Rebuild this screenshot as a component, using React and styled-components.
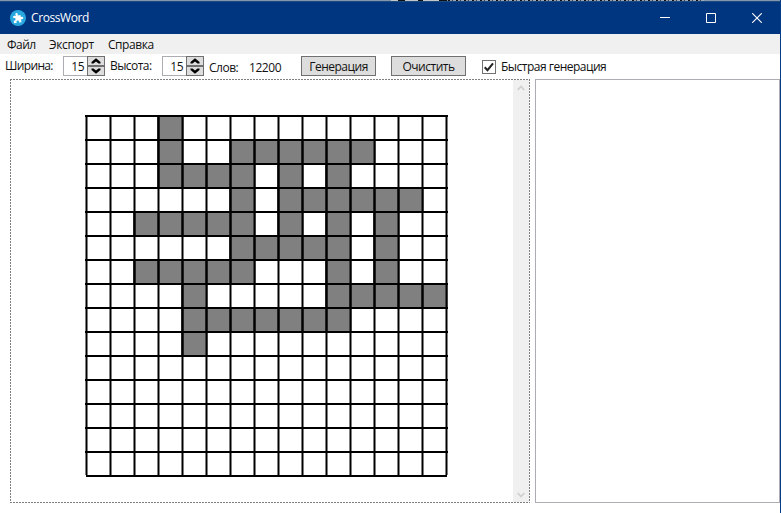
import React from "react";
import styled, { createGlobalStyle } from "styled-components";

const GlobalStyle = createGlobalStyle`
  *, *::before, *::after { box-sizing: border-box; }
  body { margin: 0; overflow: hidden; }
`;

const Window = styled.main`
  width: 781px;
  height: 513px;
  display: flex;
  flex-direction: column;
  background: #fff;
  border-right: 1px solid #053c88;
  color: #111;
  font: 12px/16px "Open Sans", "Noto Sans", sans-serif;
  overflow: hidden;
`;

const BackdropSliver = styled.div`
  height: 1px;
  flex: none;
  margin-right: -1px;
  background:
    repeating-linear-gradient(90deg, #111 0 2px, #8fa0b4 2px 4px, #4a4038 4px 5px, #9aabbd 5px 8px) 448px 0 / 256px 1px no-repeat,
    linear-gradient(#111, #111) 398px 0 / 7px 1px no-repeat,
    linear-gradient(#111, #111) 418px 0 / 5px 1px no-repeat,
    linear-gradient(#111, #111) 439px 0 / 8px 1px no-repeat,
    linear-gradient(#c4c7ca, #c4c7ca) 391px 0 / 48px 1px no-repeat,
    #8496ab;
`;

const TitleBar = styled.header`
  height: 33px;
  flex: none;
  display: flex;
  align-items: center;
  padding-left: 10px;
  background: #00357f;
  border-top: 1px solid #1b4a83;
  color: #fff;
`;

const Title = styled.h1`
  margin: 0 auto 0 5px;
  font-size: 12px;
  font-weight: 400;
  letter-spacing: -0.4px;
`;

const CaptionButton = styled.button`
  width: 46px;
  height: 30px;
  padding: 0;
  border: 0;
  background: none;
  color: inherit;
  display: grid;
  place-items: center;
`;

const CaptionButtons = styled.div`
  display: flex;
`;

const MenuBar = styled.nav`
  height: 20px;
  flex: none;
  display: flex;
  gap: 14px;
  padding: 3px 0 0 7px;
  background: #f0f0f0;
`;

const MenuItem = styled.span`
  width: ${(p) => p.$width}px;
  white-space: nowrap;
  letter-spacing: ${(p) => p.$track}px;
`;

const ToolBar = styled.section`
  height: 25px;
  flex: none;
  display: flex;
  align-items: flex-start;
  padding: 2px 0 0 5px;
`;

const Caption = styled.span`
  width: ${(p) => p.$width}px;
  padding-top: ${(p) => p.$drop || 2}px;
  white-space: nowrap;
  letter-spacing: ${(p) => p.$track}px;
`;

const Spinner = styled.div`
  width: 42px;
  height: 20px;
  margin-right: 5px;
  display: flex;
  border: 1px solid #abadb3;
`;

const SpinnerValue = styled.span`
  flex: 1;
  padding: 2px 3px 0 0;
  text-align: right;
  letter-spacing: -0.5px;
`;

const SpinnerButtons = styled.div`
  width: 18px;
  margin: -1px -1px -1px 0;
  display: grid;
  grid-template-rows: 10px 10px;
`;

const StepButton = styled.button`
  padding: 0;
  border: 1px solid #707070;
  background: #ddd;
  display: grid;
  place-items: center;
`;

const PushButton = styled.button`
  width: 75px;
  height: 20px;
  margin-right: ${(p) => p.$after}px;
  padding: 2px 0 0;
  border: 1px solid #707070;
  background: #ddd;
  color: #111;
  font: inherit;
  letter-spacing: -0.5px;
`;

const CheckBox = styled.span`
  width: 14px;
  height: 14px;
  margin: 4px 5px 0 0;
  display: grid;
  place-items: center;
  border: 1px solid #707070;
`;

const Workspace = styled.div`
  height: 424px;
  display: flex;
  gap: 5px;
  padding-left: 10px;
`;

const BoardPane = styled.section`
  width: 520px;
  display: flex;
  justify-content: space-between;
  background:
    repeating-linear-gradient(90deg, #808080 0 2px, #fff 2px 3px) 0 0 / 100% 1px no-repeat,
    repeating-linear-gradient(90deg, #808080 0 2px, #fff 2px 3px) 0 100% / 100% 1px no-repeat,
    repeating-linear-gradient(180deg, #808080 0 2px, #fff 2px 3px) 0 0 / 1px 100% no-repeat,
    repeating-linear-gradient(180deg, #808080 0 2px, #fff 2px 3px) 100% 0 / 1px 100% no-repeat;
`;

const Board = styled.div`
  height: 362px;
  margin: 36px 0 0 75px;
  display: grid;
  grid-template-columns: repeat(15, 24px) 3px;
  grid-template-rows: repeat(15, 24px) 2px;
`;

const Cell = styled.div`
  --edge: rgba(0, 0, 0, ${(p) => (p.$heavy ? 0.75 : 0.5)});
  border-top: 2px solid #000;
  background:
    linear-gradient(90deg, var(--edge) 1px, #000 1px 2px, var(--edge) 2px 3px, transparent 3px),
    ${(p) => (p.$filled ? "#808080" : "#fff")};
`;

const BoardEdge = styled.div`
  grid-column: 1 / -1;
  margin: 0 1px;
  background: #000;
`;

const ScrollBar = styled.div`
  width: 16px;
  margin: 1px 1px 1px 0;
  padding: 5px 0 4px;
  display: flex;
  flex-direction: column;
  align-items: center;
  justify-content: space-between;
  background: #f0f0f0;
`;

const WordList = styled.aside`
  flex: 1;
  border: 1px solid #abadb3;
`;

const FILLED = [
  [3],
  [3, 6, 7, 8, 9, 10, 11],
  [3, 4, 5, 6, 8, 10],
  [6, 8, 9, 10, 11, 12, 13],
  [2, 3, 4, 5, 6, 8, 10, 12],
  [6, 7, 8, 9, 10, 12],
  [2, 3, 4, 5, 6, 10, 12],
  [4, 10, 11, 12, 13, 14],
  [4, 5, 6, 7, 8, 9, 10],
  [4],
  [], [], [], [], [],
];

function PuzzleIcon() {
  return (
    <svg width="16" height="16" viewBox="0 0 16 16">
      <circle cx="8" cy="8" r="8" fill="#29a8e0" />
      <path fill="#fff" transform="rotate(-8 8 8)" d="M3.400 5.400h2.900C5.600 4.100 5.900 2.800 7.100 2.800s1.600 1.300.9 2.600h2.900v2.300c1.300-.7 2.300-.2 2.300.9s-1 1.700-2.300 1v3H8.300c.6-1.300.1-2.100-1-2.100s-1.700.8-1.100 2.100H3.400V9.900c1.400.6 2-.1 2-1.100s-.6-1.700-2-1.100z" />
    </svg>
  );
}

function StepArrow({ down }) {
  return (
    <svg width="10" height="6" viewBox="0 0 10 6">
      <path d={down ? "M.5.5h2L5 2.500 7.500.5h2V2L5 5.800.5 2z" : "M.5 5.500h2L5 3.500l2.500 2h2V4L5 .2.5 4z"} fill="#000" />
    </svg>
  );
}

function ScrollArrow({ down }) {
  return (
    <svg width="8" height="6" viewBox="0 0 8 6">
      <path d={down ? "M.7 1 4 4.500 7.300 1" : "M.7 5 4 1.500 7.300 5"} fill="none" stroke="#cfcfcf" strokeWidth="1.700" />
    </svg>
  );
}

function NumberField({ value }) {
  return (
    <Spinner>
      <SpinnerValue>{value}</SpinnerValue>
      <SpinnerButtons>
        <StepButton aria-label="+"><StepArrow /></StepButton>
        <StepButton aria-label="-"><StepArrow down /></StepButton>
      </SpinnerButtons>
    </Spinner>
  );
}

function Crossword() {
  return (
    <Board>
      {FILLED.map((row, r) =>
        Array.from({ length: 16 }, (_, c) => (
          <Cell
            key={`${r}-${c}`}
            $filled={c < 15 && row.includes(c)}
            $heavy={row.includes(c) || row.includes(c - 1)}
          />
        ))
      )}
      <BoardEdge />
    </Board>
  );
}

export default function App() {
  return (
    <>
      <GlobalStyle />
      <Window>
        <BackdropSliver />
        <TitleBar>
          <PuzzleIcon />
          <Title>CrossWord</Title>
          <CaptionButtons>
            <CaptionButton aria-label="Minimize">
              <svg width="10" height="10"><path d="M0 4.500h10" stroke="#fff" /></svg>
            </CaptionButton>
            <CaptionButton aria-label="Maximize">
              <svg width="10" height="10"><path d="M.5.5h9v9h-9z" fill="none" stroke="#fff" /></svg>
            </CaptionButton>
            <CaptionButton aria-label="Close">
              <svg width="10" height="10"><path d="m.2.2 9.600 9.600m0-9.600L.2 9.800" stroke="#fff" strokeWidth="1.100" /></svg>
            </CaptionButton>
          </CaptionButtons>
        </TitleBar>
        <MenuBar>
          <MenuItem $width={28} $track={-0.5}>Файл</MenuItem>
          <MenuItem $width={45} $track={-0.35}>Экспорт</MenuItem>
          <MenuItem $width={46} $track={-0.45}>Справка</MenuItem>
        </MenuBar>
        <ToolBar>
          <Caption $width={58} $track={-0.65}>Ширина:</Caption>
          <NumberField value={15} />
          <Caption $width={52} $track={-0.55}>Высота:</Caption>
          <NumberField value={15} />
          <Caption $width={40} $drop={4} $track={-0.5}>Слов:</Caption>
          <Caption $width={52} $drop={4} $track={-0.45}>12200</Caption>
          <PushButton $after={15}>Генерация</PushButton>
          <PushButton $after={16}>Очистить</PushButton>
          <CheckBox>
            <svg width="12" height="12" viewBox="0 0 12 12">
              <path d="m1.700 6.200 2.800 3L10 2.300" fill="none" stroke="#212121" strokeWidth="2" />
            </svg>
          </CheckBox>
          <Caption $width={110} $drop={3} $track={-0.5}>Быстрая генерация</Caption>
        </ToolBar>
        <Workspace>
          <BoardPane>
            <Crossword />
            <ScrollBar>
              <ScrollArrow />
              <ScrollArrow down />
            </ScrollBar>
          </BoardPane>
          <WordList />
        </Workspace>
      </Window>
    </>
  );
}
